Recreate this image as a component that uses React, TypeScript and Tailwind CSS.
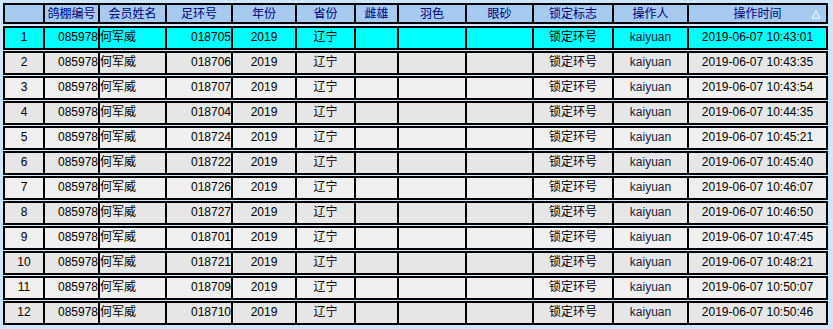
import React from "react";

const widths = [40, 55, 67, 66, 64, 59, 43, 68, 67, 80, 75, 137];
const headers = ["", "鸽棚编号", "会员姓名", "足环号", "年份", "省份", "雌雄", "羽色", "眼砂", "锁定标志", "操作人", "操作时间"];
const aligns = [
  "justify-center",
  "justify-end",
  "justify-start",
  "justify-end",
  "justify-center",
  "justify-center",
  "justify-center",
  "justify-center",
  "justify-center",
  "justify-center",
  "justify-center",
  "justify-center",
];

const data: [string, string][] = [
  ["018705", "10:43:01"],
  ["018706", "10:43:35"],
  ["018707", "10:43:54"],
  ["018704", "10:44:35"],
  ["018724", "10:45:21"],
  ["018722", "10:45:40"],
  ["018726", "10:46:07"],
  ["018727", "10:46:50"],
  ["018701", "10:47:45"],
  ["018721", "10:48:21"],
  ["018709", "10:50:07"],
  ["018710", "10:50:46"],
];

const font = { fontFamily: '"Liberation Sans", Arial, "Noto Sans CJK SC", sans-serif' };

export default function App() {
  return (
    <div className="w-[833px] h-[329px] bg-[#cde5fd] pt-[3px] pl-[3px] overflow-hidden" style={font}>
      <div className="flex h-[21px] w-[825px] border-2 border-black bg-[#a6caf0]">
        {headers.map((h, i) => (
          <div
            key={i}
            className={`relative flex items-center justify-center shrink-0 text-[12px] text-[#000080] whitespace-nowrap ${i < 11 ? "border-r-2 border-black" : ""}`}
            style={{ width: widths[i] }}
          >
            {h}
            {i === 11 && (
              <svg className="absolute right-[5px] top-[5px]" width="10" height="9" viewBox="0 0 10 9">
                <path d="M5 1 L9 8 L1 8 Z" fill="none" stroke="#ffffff" strokeWidth="1" />
              </svg>
            )}
          </div>
        ))}
      </div>
      <div className="mt-[2px] flex flex-col gap-[1px]">
        {data.map((r, idx) => {
          const cells = [
            String(idx + 1),
            "085978",
            "何军威",
            r[0],
            "2019",
            "辽宁",
            "",
            "",
            "",
            "锁定环号",
            "kaiyuan",
            `2019-06-07 ${r[1]}`,
          ];
          const bg = idx === 0 ? "bg-[#00ffff]" : idx % 2 === 1 ? "bg-[#e6e6e6]" : "bg-[#f0f0f0]";
          return (
            <div key={idx} className={`flex h-[24px] w-[825px] border-2 border-black ${bg}`}>
              {cells.map((c, i) => (
                <div
                  key={i}
                  className={`flex items-center pb-[3px] shrink-0 overflow-hidden whitespace-nowrap text-[12px] ${i === 10 ? "text-[#1a1a40]" : "text-black"} ${aligns[i]} ${i < 11 ? "border-r-2 border-black" : ""}`}
                  style={{ width: widths[i] }}
                >
                  {c}
                </div>
              ))}
            </div>
          );
        })}
      </div>
    </div>
  );
}
